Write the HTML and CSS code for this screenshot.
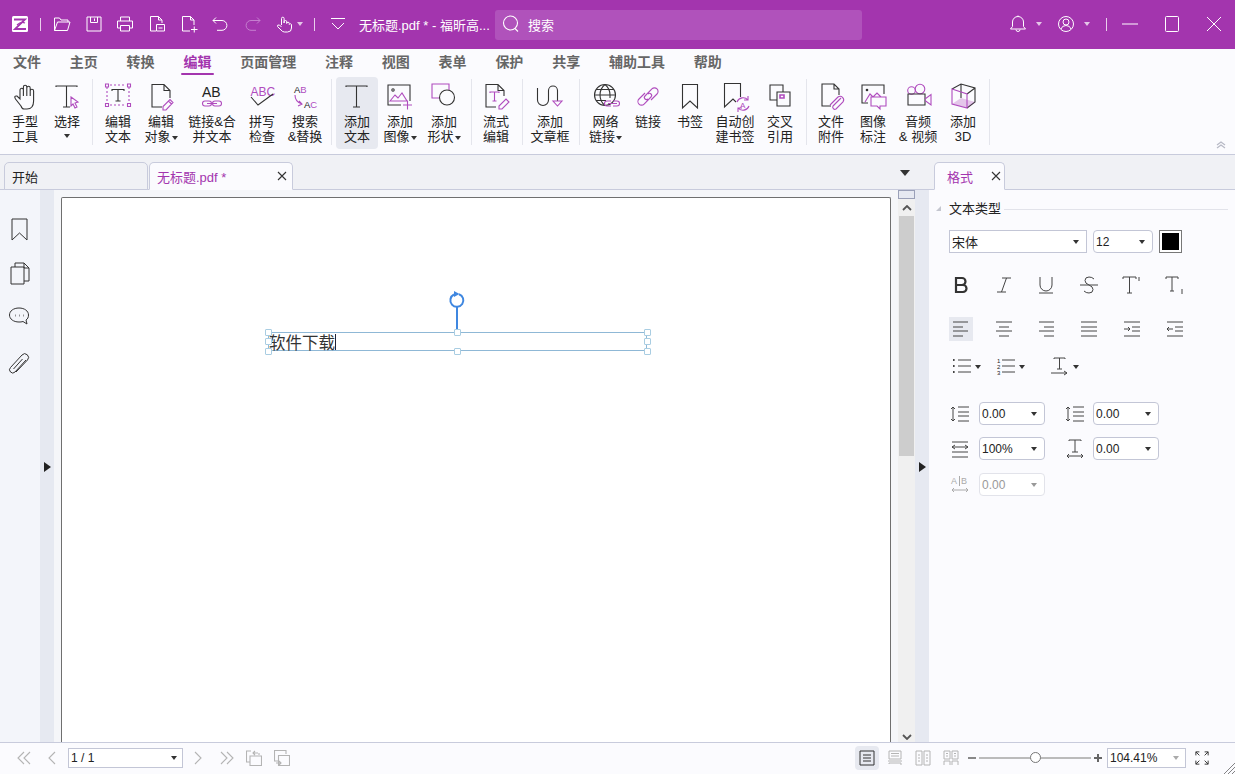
FILE: index.html
```html
<!DOCTYPE html>
<html lang="zh-CN">
<head>
<meta charset="utf-8">
<title>无标题.pdf * - 福昕高级PDF编辑器</title>
<link rel="stylesheet" href="styles.css">
</head>
<body>
<div class="app">
  <header class="titlebar">
    <svg class="tb-logo" viewBox="0 0 16 16"><rect width="16" height="16" rx="1.5" fill="#fff"/><path d="M2 3.500h11L3 13h11" fill="none" stroke="#a335ae" stroke-width="1.8"/><path d="M5 9q4-4 8-2" fill="none" stroke="#a335ae" stroke-width="1.2"/></svg>
    <span class="tb-sep s1"></span>
    <svg class="tb-ic i1" viewBox="0 0 18 18"><path d="M1.500 15.500V3h5l1.500 2h7v2M1.500 15.500h13L17 7H4.500z"/></svg>
    <svg class="tb-ic i2" viewBox="0 0 18 18"><path d="M2 2h14v14H2zM5.500 2v5.500h7V2M9.500 3.500v2.500"/></svg>
    <svg class="tb-ic i3" viewBox="0 0 18 18"><path d="M4.500 6V2h9v4M4.500 13H1.500V6h15v7h-3M4.500 10.500h9V16h-9z"/></svg>
    <svg class="tb-ic i4" viewBox="0 0 18 18"><path d="M8 16H2.500V1.500h8l3.500 3.500v3M10.500 1.500V5H14M8.500 9.500h8v6.500h-8zM10.500 13h4"/></svg>
    <svg class="tb-ic i5" viewBox="0 0 18 18"><path d="M10 16H2.500V1.500h8L14 5v5M10.500 1.500V5H14M11 14.500h6.500M14.250 11.500v6"/></svg>
    <svg class="tb-ic i6" viewBox="0 0 18 18"><path d="M5 2.500L2 5.500l3 3M2 5.500h9a4.800 4.800 0 0 1 0 9.800H6"/></svg>
    <svg class="tb-ic i7 dim" viewBox="0 0 18 18"><path d="M13 2.500l3 3-3 3M16 5.500H7a4.800 4.800 0 0 0 0 9.800h5"/></svg>
    <svg class="tb-ic i8" viewBox="0 0 18 18"><path d="M5.500 10V3.500a1.300 1.300 0 0 1 2.600 0V8V6.800a1.300 1.300 0 0 1 2.600 0V8.500a1.300 1.300 0 0 1 2.600 0V9.500a1.200 1.200 0 0 1 2.200 0V13q0 4-4 4H8.500Q6.500 17 5 15L1.500 11.500Q1 9.500 3.500 10L5.500 12"/></svg>
    <span class="caret light c1"></span>
    <span class="tb-sep s2"></span>
    <svg class="tb-ic i9" viewBox="0 0 18 18"><path d="M2 3.500h14M3 8l6 6 6-6"/></svg>
    <span class="tb-title">无标题.pdf * - 福昕高...</span>
    <div class="tb-search">
      <svg viewBox="0 0 18 18"><circle cx="8.500" cy="8" r="7"/><path d="M13 13.500l3 3"/></svg>
      <span>搜索</span>
    </div>
    <svg class="tb-ic r1" viewBox="0 0 18 18"><path d="M1.500 14h15l-2-2.500V7A5.500 5.500 0 0 0 3.500 7v4.500zM7 14.500a2 2 0 0 0 4 0M9 .5v1"/></svg>
    <span class="caret light c2"></span>
    <svg class="tb-ic r2" viewBox="0 0 18 18"><circle cx="9" cy="9" r="7.500"/><circle cx="9" cy="7" r="3"/><path d="M4 14q1-3.500 5-3.500t5 3.500"/></svg>
    <span class="caret light c3"></span>
    <span class="tb-sep s3"></span>
    <svg class="tb-win w1" viewBox="0 0 16 16"><path d="M0 8h16"/></svg>
    <svg class="tb-win w2" viewBox="0 0 16 16"><rect x="1.500" y="0.500" width="13" height="15" rx="1"/></svg>
    <svg class="tb-win w3" viewBox="0 0 16 16"><path d="M1 1l14 14M15 1L1 15"/></svg>
  </header>

  <nav class="menubar">
    <span class="menu-item">文件</span>
    <span class="menu-item">主页</span>
    <span class="menu-item">转换</span>
    <span class="menu-item active">编辑</span>
    <span class="menu-item">页面管理</span>
    <span class="menu-item">注释</span>
    <span class="menu-item">视图</span>
    <span class="menu-item">表单</span>
    <span class="menu-item">保护</span>
    <span class="menu-item">共享</span>
    <span class="menu-item">辅助工具</span>
    <span class="menu-item">帮助</span>
  </nav>

  <section class="ribbon">
    <div class="rb w42">
      <svg viewBox="0 0 32 32"><path d="M12 25L6.500 18Q4.500 14.500 8 15L11 18V9a1.700 1.700 0 0 1 3.400 0V6a1.700 1.700 0 0 1 3.400 0V7a1.700 1.700 0 0 1 3.400 0V10a1.700 1.700 0 0 1 3.400 0V20Q24.500 28 18 28H15Q13 28 12 25zM14.400 9v6M17.800 7v8M21.200 9v6"/></svg>
      <span>手型<br>工具</span>
    </div>
    <div class="rb w42">
      <svg viewBox="0 0 32 32"><path d="M5 6V5h21v1M15.500 5v21M12 26h7"/><path class="ac" d="M20 16l7 5-3 1 2 4-2 1-2-4-2 2z"/></svg>
      <span>选择<br><i class="caret solo"></i></span>
    </div>
    <i class="sep m4"></i>
    <div class="rb w42">
      <svg viewBox="0 0 32 32"><path class="ac dash" d="M5 6v16M27 6v16M8 4h16M8 24h16"/><path class="ac" d="M3.500 3h3v3h-3zM25.500 3h3v3h-3zM3.500 22.500h3v3h-3zM25.500 22.500h3v3h-3z"/><path d="M10 10V8.500h12V10M16 8.500V20M13.500 20h5"/></svg>
      <span>编辑<br>文本</span>
    </div>
    <div class="rb w44">
      <svg viewBox="0 0 32 32"><path d="M17 26H7V3.500h12l6 6V17M19 3.500v6h6"/><path class="ac" d="M18 29v-3.500l7-7 3 3-7 7.500zM23.500 20l3 3"/></svg>
      <span>编辑<br>对象<i class="caret"></i></span>
    </div>
    <div class="rb w58">
      <svg viewBox="0 0 32 32"><text class="svg-t" x="6" y="16" font-size="14">AB</text><path class="ac" d="M13 20H9a2.500 2.500 0 0 0 0 5h4a2.500 2.500 0 0 0 0-5M19 20h4a2.500 2.500 0 0 1 0 5h-4a2.500 2.500 0 0 1 0-5M11 22.500h10"/></svg>
      <span>链接&amp;合<br>并文本</span>
    </div>
    <div class="rb w42">
      <svg viewBox="0 0 32 32"><text class="svg-t ac-t" x="4.500" y="15" font-size="12">ABC</text><path d="M5 16l7 8 15-11"/></svg>
      <span>拼写<br>检查</span>
    </div>
    <div class="rb w44">
      <svg viewBox="0 0 32 32"><text class="svg-t" x="5" y="12" font-size="9.500">A<tspan class="ac-t">B</tspan></text><text class="svg-t" x="15" y="27" font-size="9.500">A<tspan class="ac-t">C</tspan></text><path class="ac" d="M6 14q0 7 7 9M10 20l3 3-4 2"/></svg>
      <span>搜索<br>&amp;替换</span>
    </div>
    <i class="sep m4"></i>
    <div class="rb w42 selected">
      <svg viewBox="0 0 32 32"><path d="M5 6V5h21v1M15.500 5v21M12 26h7"/></svg>
      <span>添加<br>文本</span>
    </div>
    <div class="rb w44">
      <svg viewBox="0 0 32 32"><path d="M26 20V4H4v20h13"/><circle cx="9" cy="9" r="1.200"/><path class="ac" d="M6 20l5-6 3 3 4-5 5 8zM19 24h9M23.500 19.500v9"/></svg>
      <span>添加<br>图像<i class="caret"></i></span>
    </div>
    <div class="rb w44">
      <svg viewBox="0 0 32 32"><path class="ac" d="M12 17H4V3h17v6"/><circle cx="19" cy="16.500" r="7.500"/></svg>
      <span>添加<br>形状<i class="caret"></i></span>
    </div>
    <i class="sep sa"></i>
    <div class="rb w40">
      <svg viewBox="0 0 32 32"><path d="M16 26H6V3.500h12l6 6V15M18 3.500v6h6"/><path class="ac" d="M10 12v-1h9v1M14.500 11v9M12.500 20h4"/><path class="ac" d="M19 28v-3l7-7 3 3-7 7z"/></svg>
      <span>流式<br>编辑</span>
    </div>
    <i class="sep sb"></i>
    <div class="rb w44">
      <svg viewBox="0 0 32 32"><path d="M3.500 7V19a5.500 5.500 0 0 0 11 0V9.500a4.500 4.500 0 0 1 9 0V20"/><path class="ac" d="M19 20h9l-4.500 5z"/></svg>
      <span>添加<br>文章框</span>
    </div>
    <i class="sep sc"></i>
    <div class="rb w43">
      <svg viewBox="0 0 32 32"><circle cx="15" cy="14" r="10.500"/><path d="M4.500 14h21M6 8.500h18M6 19.500h10M15 3.500q-5 4-5 10.500t5 10.500M15 3.500q5 4 5 10.500v3"/><path class="ac" d="M21 20h-4a2.500 2.500 0 0 0 0 5h4M23 20h4a2.500 2.500 0 0 1 0 5h-4M18 22.500h9"/></svg>
      <span>网络<br>链接<i class="caret"></i></span>
    </div>
    <div class="rb w42">
      <svg viewBox="0 0 32 32"><path class="ac" d="M13 12L7 18a3.600 3.600 0 0 0 5.100 5.100L19 16a2 2 0 0 0-3-3M19 19L25 13a3.600 3.600 0 0 0-5.100-5.100L13 15a2 2 0 0 0 3 3"/></svg>
      <span>链接</span>
    </div>
    <div class="rb w42">
      <svg viewBox="0 0 32 32"><path d="M8.500 3.500h15V27L16 20l-7.500 7z"/></svg>
      <span>书签</span>
    </div>
    <div class="rb w48">
      <svg viewBox="0 0 32 32"><path d="M21.500 16V2.500h-16V26l8.500-8 3 3"/><path class="ac" d="M18 21a6.500 6.500 0 0 1 11-2M30 25a6.500 6.500 0 0 1-11 2M29 15v4h-4M19 31v-4h4"/><text class="svg-t ac-t" x="21" y="27" font-size="8">A</text></svg>
      <span>自动创<br>建书签</span>
    </div>
    <div class="rb w42">
      <svg viewBox="0 0 32 32"><path d="M19 11V4H6v15h7M13 11h13v14H13z"/><path class="ac fill" d="M16 14h4v3h-4z"/></svg>
      <span>交叉<br>引用</span>
    </div>
    <i class="sep sd"></i>
    <div class="rb w42">
      <svg viewBox="0 0 32 32"><path d="M16 25H7V3h12l5 5v6M19 3v5h5"/><path class="ac" d="M26 17l-8 8a2.200 2.200 0 0 0 3 3l7-7a3.600 3.600 0 0 0-5-5l-8 8M24 19l-6 6"/></svg>
      <span>文件<br>附件</span>
    </div>
    <div class="rb w42">
      <svg viewBox="0 0 32 32"><path d="M27 13V4H5v18h6"/><circle class="solid" cx="10" cy="9" r="1.300"/><path class="ac" d="M8 21l5-8 3 3 4-4 4 4M14 16h15v9h-6v3l-3-3h-6z"/></svg>
      <span>图像<br>标注</span>
    </div>
    <div class="rb w48">
      <svg viewBox="0 0 32 32"><circle class="ac" cx="9.500" cy="9.500" r="3.800"/><circle class="ac" cx="18" cy="8" r="4.800"/><path d="M6 13h17v11H6z"/><path class="ac" d="M23 18l6-4.500v10.500l-6-4.500"/></svg>
      <span>音频<br>&amp; 视频</span>
    </div>
    <div class="rb w42">
      <svg viewBox="0 0 32 32"><path d="M5 8L14 3l14 4v14l-8 6M20 13l8-6M14 3v14"/><path class="ac fillsoft" d="M5 23l9-6 14 4-8 6z"/><path class="ac" d="M5 8l15 5v14L5 23z"/></svg>
      <span>添加<br>3D</span>
    </div>
    <i class="sep m5"></i>
    <svg class="rb-collapse" viewBox="0 0 10 8"><path d="M1 4l4-3 4 3M1 7l4-3 4 3"/></svg>
  </section>

  <div class="tabstrip">
    <div class="tab">开始</div>
    <div class="tab current"><span>无标题.pdf *</span><svg class="x" viewBox="0 0 10 10"><path d="M1 1l8 8M9 1L1 9"/></svg></div>
    <i class="caret tabs-more"></i>
    <div class="tab panel-tab"><span>格式</span><svg class="x" viewBox="0 0 10 10"><path d="M1 1l8 8M9 1L1 9"/></svg></div>
  </div>

  <main class="main">
    <aside class="rail">
      <svg viewBox="0 0 24 24"><path d="M5 2h15v21l-7.500-7L5 23z"/></svg>
      <svg viewBox="0 0 24 24"><path d="M8 6V2h9l5 5v13h-5M17 2v5h5M4 6h13v17H4z"/></svg>
      <svg viewBox="0 0 24 24"><path d="M12 3c5.500 0 9.500 3 9.500 7 0 2.500-1 4-2.500 5l1 4-4-2.500c-1.500.5-2.500.5-4 .5-5.500 0-9.500-3-9.500-7s4-7 9.500-7z"/><path d="M8 10.500h.5M12 10.500h.5M16 10.500h.5" stroke-width="1.800"/></svg>
      <svg viewBox="0 0 24 24"><path d="M19 8L8 20a3 3 0 0 1-4.500-4.500L15 3a3.600 3.600 0 0 1 5.500 5L9 20M15.500 7l-9 10"/></svg>
    </aside>
    <div class="splitter"><i class="tri-right"></i></div>
    <div class="canvas">
      <div class="page">
        <div class="handle-stem"></div>
        <svg class="rotate" viewBox="0 0 18 18"><path d="M6 3.500a6.500 6.500 0 1 0 5-.3"/><path class="rot-head" d="M6 0l5.500 3L6 6z"/></svg>
        <div class="textbox">
          <span class="tb-text">软件下载</span><i class="text-caret"></i>
          <i class="hd tl"></i><i class="hd tc"></i><i class="hd tr"></i>
          <i class="hd ml"></i><i class="hd mr"></i>
          <i class="hd bl"></i><i class="hd bc"></i><i class="hd br"></i>
        </div>
      </div>
    </div>
    <div class="scrollbar">
      <i class="split-box"></i>
      <svg class="sb-arrow up" viewBox="0 0 10 6"><path d="M1 5l4-4 4 4"/></svg>
      <div class="sb-track"><div class="sb-thumb"></div></div>
      <svg class="sb-arrow down" viewBox="0 0 10 6"><path d="M1 1l4 4 4-4"/></svg>
    </div>
    <div class="splitter"><i class="tri-right"></i></div>
    <aside class="panel">
      <div class="section-head"><i class="tri-corner"></i><span>文本类型</span><i class="rule"></i></div>
      <div class="font-row">
        <div class="sel square font"><span>宋体</span><i class="caret"></i></div>
        <div class="sel size"><span>12</span><i class="caret"></i></div>
        <div class="swatch"><i></i></div>
      </div>
      <div class="fmt-row styles">
        <span class="cell"><svg viewBox="0 0 20 20"><path class="bold" d="M5 3h6a3.400 3.400 0 0 1 0 7H5zM5 10h7a3.500 3.500 0 0 1 0 7H5z"/></svg></span>
        <span class="cell"><svg viewBox="0 0 20 20"><path d="M8 3h9M3 17h9M12.500 3L7.500 17"/></svg></span>
        <span class="cell"><svg viewBox="0 0 20 20"><path d="M4 2v8a6 6 0 0 0 12 0V2M3 18h14"/></svg></span>
        <span class="cell"><svg viewBox="0 0 20 20"><path d="M15 4q-2-2-5-2-4 0-4 3.500 0 3 4 4.500 4 1.500 4 4.500 0 3.500-4 3.500-3 0-5-2M1 10h18"/></svg></span>
        <span class="cell"><svg viewBox="0 0 20 20"><path d="M1 4V2h13v2M7.500 2v16M5 18h5M17 2v4"/></svg></span>
        <span class="cell"><svg viewBox="0 0 20 20"><path d="M1 4V2h12v2M7 2v14M5 16h4M17 14v5"/></svg></span>
      </div>
      <div class="fmt-row aligns">
        <span class="cell on"><svg viewBox="0 0 20 20"><path d="M2 3h15M2 8h10M2 12h15M2 17h10"/></svg></span>
        <span class="cell"><svg viewBox="0 0 20 20"><path d="M2 3h16M5 8h10M2 12h16M5 17h10"/></svg></span>
        <span class="cell"><svg viewBox="0 0 20 20"><path d="M3 3h15M8 8h10M3 12h15M8 17h10"/></svg></span>
        <span class="cell"><svg viewBox="0 0 20 20"><path d="M2 3h16M2 8h16M2 12h16M2 17h16"/></svg></span>
        <span class="cell"><svg viewBox="0 0 20 20"><path d="M2 3h16M10 8h8M10 12h8M2 17h16M2 10h6M6 8l2 2-2 2"/></svg></span>
        <span class="cell"><svg viewBox="0 0 20 20"><path d="M2 3h16M10 8h8M10 12h8M2 17h16M2 10h6M4 8l-2 2 2 2"/></svg></span>
      </div>
      <div class="fmt-row lists">
        <span class="lcell"><svg viewBox="0 0 20 20"><path d="M6 3h13M6 9h13M6 15h13"/><path class="dots" d="M1 3h1.600M1 9h1.600M1 15h1.600"/></svg><i class="caret"></i></span>
        <span class="lcell"><svg viewBox="0 0 20 20"><text class="svg-t num" x="1" y="6">1</text><text class="svg-t num" x="1" y="12">2</text><text class="svg-t num" x="1" y="18">3</text><path d="M6 3h13M6 9h13M6 15h13"/></svg><i class="caret"></i></span>
        <span class="lcell wide"><svg viewBox="0 0 20 20"><path d="M4 2V1h11v1M9.500 1v11M7 12h5M1 16h16M14 14l3 2-3 2"/></svg><i class="caret"></i></span>
      </div>
      <div class="spacing">
        <svg viewBox="0 0 20 20"><path d="M3 3v14M1 5l2-2 2 2M1 15l2 2 2-2M8 3h11M8 8h11M8 12h11M8 17h11"/></svg>
        <div class="sel num"><span>0.00</span><i class="caret"></i></div>
        <svg class="second" viewBox="0 0 20 20"><path d="M3 3v14M1 5l2-2 2 2M1 15l2 2 2-2M8 3h11M8 8h11M8 12h11M8 17h11"/></svg>
        <div class="sel num"><span>0.00</span><i class="caret"></i></div>
      </div>
      <div class="spacing">
        <svg viewBox="0 0 20 20"><path d="M2 3h16M2 8h16M2 13h16M2 18h16M5 6L2 8l3 2M15 6l3 2-3 2"/></svg>
        <div class="sel num"><span>100%</span><i class="caret"></i></div>
        <svg class="second" viewBox="0 0 20 20"><path d="M4 2V1h12v1M10 1v12M7 13h6M2 17h16M4 15l-2 2 2 2M16 15l2 2-2 2"/></svg>
        <div class="sel num"><span>0.00</span><i class="caret"></i></div>
      </div>
      <div class="spacing off">
        <svg viewBox="0 0 20 20"><text class="svg-t dimmed" x="1" y="9" font-size="9">A</text><text class="svg-t dimmed" x="11" y="9" font-size="9">B</text><path d="M9.500 1v10M2 15h16M4 13l-2 2 2 2M16 13l2 2-2 2"/></svg>
        <div class="sel num"><span>0.00</span><i class="caret"></i></div>
      </div>
    </aside>
  </main>

  <footer class="status">
    <svg class="st g1" viewBox="0 0 14 14"><path d="M7 1L1 7l6 6M13 1L7 7l6 6"/></svg>
    <svg class="st g2" viewBox="0 0 14 14"><path d="M10 1L4 7l6 6"/></svg>
    <div class="sel square page-sel"><span>1 / 1</span><i class="caret"></i></div>
    <svg class="st g3" viewBox="0 0 14 14"><path d="M4 1l6 6-6 6"/></svg>
    <svg class="st g4" viewBox="0 0 14 14"><path d="M1 1l6 6-6 6M7 1l6 6-6 6"/></svg>
    <svg class="st g5" viewBox="0 0 16 16"><path d="M5 1H0.500v11H4M4 6h11.500v9.500H4zM7 3h5M9 1L7 3l2 2M13 3v2"/></svg>
    <svg class="st g6" viewBox="0 0 16 16"><path d="M12 4V.5H.5V11H4M4.500 5.500h11V15.500h-11zM2 13h5M5 11l2 2-2 2"/></svg>
    <span class="grow"></span>
    <span class="view on"><svg viewBox="0 0 16 16"><path d="M1 1h14v14H1zM4 5h8M4 8h8M4 11h8"/></svg></span>
    <span class="view"><svg viewBox="0 0 16 16"><path d="M2 1h12v8H2zM4 3.500h8M4 6h8M1 11h14M2 14v-1h12v2"/></svg></span>
    <span class="view"><svg viewBox="0 0 16 16"><path d="M1 1h6v14H1zM9 1h6v14H9zM3 5h2M3 8h2M3 11h2M11 5h2M11 8h2M11 11h2"/></svg></span>
    <span class="view"><svg viewBox="0 0 16 16"><path d="M1 1h6v8H1zM9 1h6v8H9zM3 3.500h2M3 6h2M11 3.500h2M11 6h2M1 15v-4h6v4M9 15v-4h6v4"/></svg></span>
    <i class="zoom-minus"></i>
    <div class="slider"><i class="thumb"></i></div>
    <i class="zoom-plus"></i>
    <div class="sel square zoom-sel"><span>104.41%</span><i class="caret"></i></div>
    <svg class="st fs" viewBox="0 0 16 16"><path d="M1 5V1h4M1 1l4 4M15 5V1h-4M15 1l-4 4M1 11v4h4M1 15l4-4M15 11v4h-4M15 15l-4-4"/></svg>
    <svg class="grip" viewBox="0 0 11 11"><path d="M11 0L0 11M11 4l-7 7M11 8l-3 3"/></svg>
  </footer>
</div>
</body>
</html>
```
FILE: styles.css
```css
* { box-sizing: border-box; }
html, body { margin: 0; padding: 0; }
body {
  width: 1235px;
  height: 774px;
  overflow: hidden;
  font-family: "Liberation Sans", "Noto Sans CJK SC", sans-serif;
  font-size: 13px;
  color: #222;
  background: #fbfbfe;
}
i { font-style: normal; display: block; }
svg { display: block; flex: none; fill: none; stroke: #333; stroke-width: 1.1; }
.app { width: 1235px; height: 774px; display: flex; flex-direction: column; }

/* carets */
.caret {
  display: inline-block;
  width: 0; height: 0;
  border-left: 3.5px solid transparent;
  border-right: 3.5px solid transparent;
  border-top: 4px solid #333;
}
.caret.light { border-top-color: #e4c6e8; }

/* title bar */
.titlebar {
  height: 49px;
  flex: none;
  display: flex;
  align-items: center;
  padding-bottom: 1px;
  background: #a335ae;
  color: #fff;
}
.tb-logo { width: 16px; height: 16px; margin-left: 12px; stroke: none; }
.tb-sep { width: 1px; height: 13px; background: #e9cfec; flex: none; }
.tb-ic { width: 18px; height: 18px; stroke: #fff; stroke-width: 1; }
.tb-ic.dim { stroke: #c57fcf; }
.s1 { margin-left: 12px; }
.i1 { margin-left: 12px; }
.i2 { margin-left: 14px; }
.i3 { margin-left: 13px; }
.i4 { margin-left: 14px; }
.i5 { margin-left: 14px; }
.i6 { margin-left: 13px; }
.i7 { margin-left: 15px; }
.i8 { margin-left: 14px; }
.c1 { margin-left: 3px; }
.s2 { margin-left: 11px; }
.i9 { margin-left: 14px; }
.tb-title { margin-left: 12px; width: 136px; font-size: 13px; color: #fff; white-space: nowrap; }
.tb-search {
  width: 367px;
  height: 30px;
  margin-top: 2px;
  display: flex;
  align-items: center;
  gap: 8px;
  padding: 0 0 2px 7px;
  background: #b052bb;
  border-radius: 3px;
  font-size: 13px;
  color: #fff;
}
.tb-search svg { width: 18px; height: 18px; stroke: #fff; }
.r1 { margin-left: 147px; }
.c2 { margin-left: 9px; }
.r2 { margin-left: 15px; }
.c3 { margin-left: 9px; }
.s3 { margin-left: 16px; }
.tb-win { width: 16px; height: 16px; stroke: #fff; stroke-width: 1; }
.w1 { margin-left: 15px; }
.w2 { margin-left: 26px; }
.w3 { margin-left: 26px; }

/* menu */
.menubar {
  margin-top: 1px;
  height: 27px;
  flex: none;
  display: flex;
  gap: 28.800px;
  padding-left: 13px;
  align-items: flex-start;
}
.menu-item {
  position: relative;
  font-size: 14px;
  line-height: 24px;
  font-weight: 700;
  color: #666;
}
.menu-item.active { color: #a335ae; }
.menu-item.active::after {
  content: "";
  position: absolute;
  left: -2px; right: -3px; bottom: -1px;
  height: 2px;
  border-radius: 1px;
  background: #a335ae;
}

/* ribbon */
.ribbon {
  height: 78px;
  flex: none;
  display: flex;
  align-items: flex-start;
  padding-left: 4px;
  border-bottom: 1px solid #c8cbdc;
  position: relative;
}
.rb {
  flex: none;
  height: 72px;
  display: flex;
  flex-direction: column;
  align-items: center;
  padding-top: 4px;
  border-radius: 4px;
}
.rb svg { width: 32px; height: 32px; stroke-width: 1.1; }
.rb span { display: block; text-align: center; line-height: 15px; font-size: 13px; white-space: nowrap; color: #222; margin-top: 1px; }
.rb .caret { margin-left: 1px; vertical-align: 1px; }
.rb .caret.solo { vertical-align: 3px; margin: 0; }
.rb.selected { background: #e7e9f0; }
.w40 { width: 40px; }
.w42 { width: 42px; }
.w43 { width: 43px; }
.w44 { width: 44px; }
.w48 { width: 48px; }
.w58 { width: 58px; }
.sep { width: 1px; height: 66px; background: #e4e5ec; flex: none; margin-top: 2px; }
.m4 { margin-left: 4px; margin-right: 4px; }
.m5 { margin-left: 5px; margin-right: 5px; }
.sa { margin-left: 5px; margin-right: 4px; }
.sb { margin-left: 6px; margin-right: 5px; }
.sc { margin-left: 7px; margin-right: 4px; }
.sd { margin-left: 5px; margin-right: 3px; }
svg .ac { stroke: #b04cbe; }
svg .ac.dash { stroke-dasharray: 2 2; }
svg .ac.fill { fill: #fff; stroke: #b04cbe; stroke-width: 1.6; }
svg .ac.fillsoft { fill: rgba(176, 76, 190, .3); stroke: none; }
svg .solid { fill: #333; stroke: none; }
.svg-t { font-family: "Liberation Sans", sans-serif; fill: #222; stroke: none; }
.svg-t .ac-t, .svg-t.ac-t { fill: #b04cbe; }
.svg-t.num { font-size: 6px; }
.svg-t.dimmed { fill: #aaa; }
.rb-collapse { position: absolute; left: 1216px; top: 64px; width: 10px; height: 8px; stroke: #b8bac6; stroke-width: 1.3; }

/* tabs */
.tabstrip {
  height: 35px;
  flex: none;
  display: flex;
  align-items: flex-end;
  padding-left: 4px;
  background: #f0f1f5;
  border-bottom: 1px solid #c8cbdc;
  gap: 1px;
}
.tab {
  width: 144px;
  height: 28px;
  margin-bottom: -1px;
  display: flex;
  align-items: center;
  justify-content: space-between;
  padding: 0 5px 0 7px;
  border: 1px solid #c8cbdc;
  border-radius: 5px 5px 0 0;
  font-size: 13px;
  color: #222;
  background: #f0f1f5;
}
.tab.current, .tab.panel-tab {
  background: #fbfbfe;
  border-bottom-color: #fbfbfe;
  color: #a335ae;
}
.tab .x { width: 10px; height: 10px; stroke: #333; stroke-width: 1.1; }
.tabs-more { margin: 0 23px 13px 606px; border-left-width: 5px; border-right-width: 5px; border-top-width: 6px; }
.tab.panel-tab { width: 71px; padding: 0 3px 0 12px; }

/* main */
.main { flex: 1; min-height: 0; display: flex; }
.rail {
  width: 40px;
  flex: none;
  background: #f3f5fa;
  display: flex;
  flex-direction: column;
  align-items: center;
  gap: 20px;
  padding-top: 27px;
}
.rail svg { width: 24px; height: 24px; stroke: #333; stroke-width: 1; margin-right: 2px; }
.rail svg:last-child { margin-top: 3px; }
.splitter {
  width: 14px;
  flex: none;
  background: #e6e9f1;
  display: flex;
  align-items: center;
  justify-content: center;
  padding-top: 2px;
}
.tri-right {
  width: 0; height: 0;
  border-top: 5px solid transparent;
  border-bottom: 5px solid transparent;
  border-left: 7px solid #222;
}
.canvas { width: 844px; flex: none; padding: 7px 7px 0 7px; background: #f5f6f9; }
.page {
  position: relative;
  width: 830px;
  height: 100%;
  background: #fff;
  border: 1px solid #6f6f6f;
  border-bottom: 0;
  border-radius: 2px 2px 0 0;
}
.textbox {
  position: absolute;
  left: 206px;
  top: 134px;
  width: 379px;
  height: 19px;
  border: 1px solid #8fb8d6;
}
.tb-text {
  position: absolute;
  left: 0;
  top: -2px;
  font-size: 16.500px;
  line-height: 24px;
  color: #333;
  white-space: nowrap;
}
.text-caret { position: absolute; left: 66px; top: 1px; width: 1px; height: 16px; background: #223; }
.hd { position: absolute; width: 7px; height: 7px; background: #fff; border: 1px solid #a9cde2; border-radius: 1px; }
.tl { left: -4px; top: -4px; }
.tc { left: 185px; top: -4px; }
.tr { left: 375px; top: -4px; }
.ml { left: -4px; top: 5px; }
.mr { left: 375px; top: 5px; }
.bl { left: -4px; top: 15px; }
.bc { left: 185px; top: 15px; }
.br { left: 375px; top: 15px; }
.handle-stem { position: absolute; left: 394px; top: 108px; width: 2px; height: 26px; background: #3f87e0; }
.rotate { position: absolute; left: 386px; top: 93px; width: 18px; height: 18px; stroke: #3f87e0; stroke-width: 2; }
.rotate .rot-head { fill: #3f87e0; stroke: none; }

/* scrollbar */
.scrollbar { width: 17px; flex: none; display: flex; flex-direction: column; align-items: center; background: #f0f0f0; }
.split-box { width: 17px; height: 9px; flex: none; background: #e6e9f1; border: 1px solid #9aa0b8; }
.sb-arrow { width: 10px; height: 6px; flex: none; stroke: #555; stroke-width: 1.800; }
.sb-arrow.up { margin: 6px 0 5px; }
.sb-arrow.down { margin: 0 0 2px; }
.sb-track { flex: 1; width: 100%; padding: 0 1px; }
.sb-thumb { height: 240px; background: #cdcdcd; }

/* panel */
.panel { flex: 1; background: #fbfbfe; padding: 0 0 0 20px; font-size: 12px; }
.section-head { display: flex; align-items: center; height: 18px; margin-top: 10px; position: relative; }
.section-head span { font-size: 13px; line-height: 18px; color: #222; }
.tri-corner {
  position: absolute; left: -13px; top: 6px;
  width: 0; height: 0;
  border-left: 5px solid transparent;
  border-bottom: 5px solid #c4c6cf;
}
.rule { flex: none; width: 224px; height: 1px; background: #e2e3ea; margin-left: 3px; }
.font-row { display: flex; margin-top: 12px; height: 23px; }
.sel {
  display: flex;
  align-items: center;
  justify-content: space-between;
  height: 23px;
  border: 1px solid #c3c6d6;
  border-radius: 4px;
  padding: 0 7px 0 2px;
  background: #fff;
  font-size: 12px;
  color: #222;
  flex: none;
}
.sel.square { border-radius: 0; }
.sel.font { width: 138px; font-size: 13px; }
.sel.size { width: 60px; margin-left: 6px; }
.swatch { width: 23px; height: 23px; margin-left: 6px; border: 1px solid #777; padding: 2px; background: #fff; }
.swatch i { width: 100%; height: 100%; background: #000; }
.fmt-row { display: flex; }
.styles, .aligns { margin-left: -9.500px; }
.cell { width: 42.800px; height: 24px; flex: none; display: flex; align-items: center; justify-content: center; }
.cell svg { width: 20px; height: 20px; stroke: #444; stroke-width: 1; }
.cell svg .bold { stroke: #333; stroke-width: 2.200; }
.styles { margin-top: 20px; }
.aligns { margin-top: 20px; }
.cell.on { background: linear-gradient(#e7e9f0, #e7e9f0) center / 24px 24px no-repeat; }
.lists { margin-top: 16px; gap: 4px; align-items: center; height: 20px; padding-left: 3px; }
.lcell { display: flex; align-items: center; gap: 3px; width: 40px; flex: none; }
.lcell svg { width: 20px; height: 20px; stroke: #444; stroke-width: 1; }
.lcell svg .dots { stroke-width: 2; }
.lcell.wide { margin-left: 10px; }
.spacing { display: flex; align-items: center; height: 23px; margin-top: 12px; }
.lists + .spacing { margin-top: 25px; }
.spacing svg { width: 20px; height: 20px; stroke: #444; stroke-width: 1; flex: none; margin-right: 9px; margin-left: 1px; }
.spacing svg.second { margin-left: 20px; margin-right: 8px; }
.sel.num { width: 66px; }
.spacing.off { margin-top: 13px; }
.spacing.off svg { stroke: #aaa; }
.spacing.off .sel { color: #999; border-color: #e2e3ea; }
.spacing.off .caret { border-top-color: #999; }

/* status */
.status {
  height: 32px;
  flex: none;
  display: flex;
  align-items: center;
  padding-bottom: 1px;
  border-top: 1px solid #c8cbdc;
  position: relative;
}
.st { width: 14px; height: 14px; stroke: #b4b4b4; stroke-width: 1.1; }
.g1 { margin-left: 17px; }
.g2 { margin-left: 14px; }
.page-sel { width: 115px; height: 20px; margin-left: 9px; padding-right: 5px; }
.g3 { margin-left: 8px; }
.g4 { margin-left: 15px; }
.g5 { width: 16px; height: 16px; margin-left: 12px; }
.g6 { width: 16px; height: 16px; margin-left: 12px; }
.grow { flex: 1; }
.view { width: 24px; height: 24px; flex: none; display: flex; align-items: center; justify-content: center; margin-right: 4px; border-radius: 4px; }
.view svg { width: 16px; height: 16px; stroke: #b4b4b4; stroke-width: 1; }
.view.on { background: #e7e9f0; }
.view.on svg { stroke: #333; }
.zoom-minus { width: 8px; height: 2px; background: #888; margin-left: 1px; }
.slider { width: 112px; height: 2px; background: #bbb; margin-left: 3px; position: relative; }
.thumb { position: absolute; left: 51px; top: -5px; width: 11px; height: 11px; border-radius: 50%; background: #fff; border: 1px solid #777; }
.zoom-plus { width: 8px; height: 8px; margin-left: 3px; background: linear-gradient(#666, #666) center / 8px 2px no-repeat, linear-gradient(#666, #666) center / 2px 8px no-repeat; }
.zoom-sel { width: 79px; height: 20px; margin-left: 5px; padding-right: 6px; }
.zoom-sel .caret { border-top-color: #aaa; }
.fs { stroke: #333; margin-left: 9px; margin-right: 26px; }
.grip { position: absolute; right: 0; bottom: 0; width: 11px; height: 11px; stroke: #666; stroke-width: .8; }
```
